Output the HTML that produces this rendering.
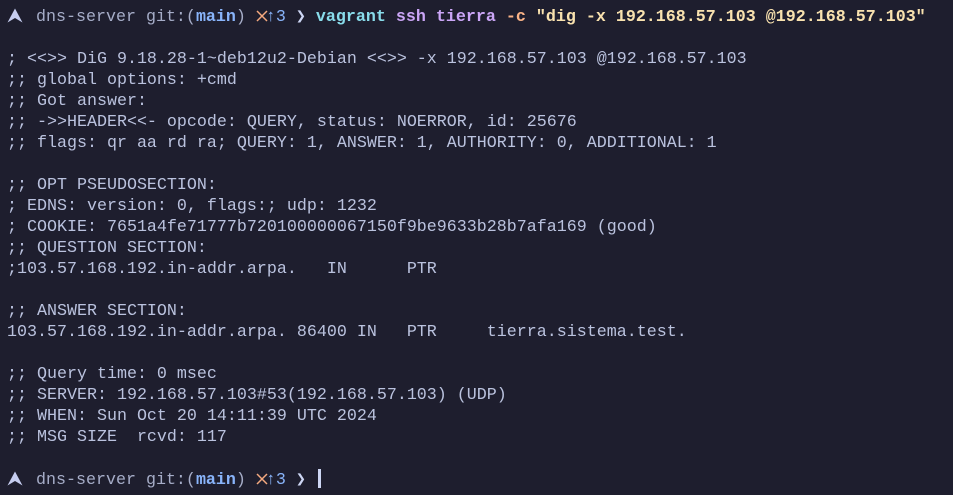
<!DOCTYPE html>
<html><head><meta charset="utf-8"><style>
html,body{margin:0;padding:0;background:#1e1e2e;width:953px;height:495px;overflow:hidden}
pre{margin:0;position:absolute;left:7px;top:7px;font-family:"Liberation Mono","DejaVu Sans Mono",monospace;font-size:16.67px;line-height:21px;color:#bac2de}
.c{display:inline-block;width:10px;text-align:center}
.b{font-weight:bold}
.p{color:#a6adc8}
</style></head><body>
<pre><span style="display:inline-block;width:29px"><svg width="16" height="15" viewBox="0 0 16 15" style="vertical-align:-2px;margin-left:0px"><path d="M8 0.5 L15.5 14.5 L8 10 L0.5 14.5 Z" fill="#c6cdf0"/></svg></span><span class="p">dns-server git:(</span><span style="color:#89b4fa" class="b">main</span><span class="p">) </span><span class="c"><svg width="12" height="12" viewBox="0 0 12 12" style="vertical-align:-1px"><path d="M1 1 L11 11 M11 1 L1 11" stroke="#f5a97f" stroke-width="1.5"/></svg></span><span class="c" style="color:#89b4fa">↑</span><span style="color:#89b4fa">3</span> <span class="c" style="color:#cdd6f4">❯</span> <span class="b" style="color:#89dceb">vagrant</span> <span class="b" style="color:#cba6f7">ssh tierra</span> <span class="b" style="color:#fab387">-c</span> <span class="b" style="color:#f9e2af">"dig -x 192.168.57.103 @192.168.57.103"</span>

; &lt;&lt;&gt;&gt; DiG 9.18.28-1~deb12u2-Debian &lt;&lt;&gt;&gt; -x 192.168.57.103 @192.168.57.103
;; global options: +cmd
;; Got answer:
;; -&gt;&gt;HEADER&lt;&lt;- opcode: QUERY, status: NOERROR, id: 25676
;; flags: qr aa rd ra; QUERY: 1, ANSWER: 1, AUTHORITY: 0, ADDITIONAL: 1

;; OPT PSEUDOSECTION:
; EDNS: version: 0, flags:; udp: 1232
; COOKIE: 7651a4fe71777b720100000067150f9be9633b28b7afa169 (good)
;; QUESTION SECTION:
;103.57.168.192.in-addr.arpa.   IN      PTR

;; ANSWER SECTION:
103.57.168.192.in-addr.arpa. 86400 IN   PTR     tierra.sistema.test.

;; Query time: 0 msec
;; SERVER: 192.168.57.103#53(192.168.57.103) (UDP)
;; WHEN: Sun Oct 20 14:11:39 UTC 2024
;; MSG SIZE  rcvd: 117

<span style="display:inline-block;width:29px"><svg width="16" height="15" viewBox="0 0 16 15" style="vertical-align:-2px;margin-left:0px"><path d="M8 0.5 L15.5 14.5 L8 10 L0.5 14.5 Z" fill="#c6cdf0"/></svg></span><span class="p">dns-server git:(</span><span style="color:#89b4fa" class="b">main</span><span class="p">) </span><span class="c"><svg width="12" height="12" viewBox="0 0 12 12" style="vertical-align:-1px"><path d="M1 1 L11 11 M11 1 L1 11" stroke="#f5a97f" stroke-width="1.5"/></svg></span><span class="c" style="color:#89b4fa">↑</span><span style="color:#89b4fa">3</span> <span class="c" style="color:#cdd6f4">❯</span> <span style="display:inline-block;width:3px;height:19px;background:#cdd6f4;vertical-align:-4px;margin-left:2px"></span></pre>
</body></html>
